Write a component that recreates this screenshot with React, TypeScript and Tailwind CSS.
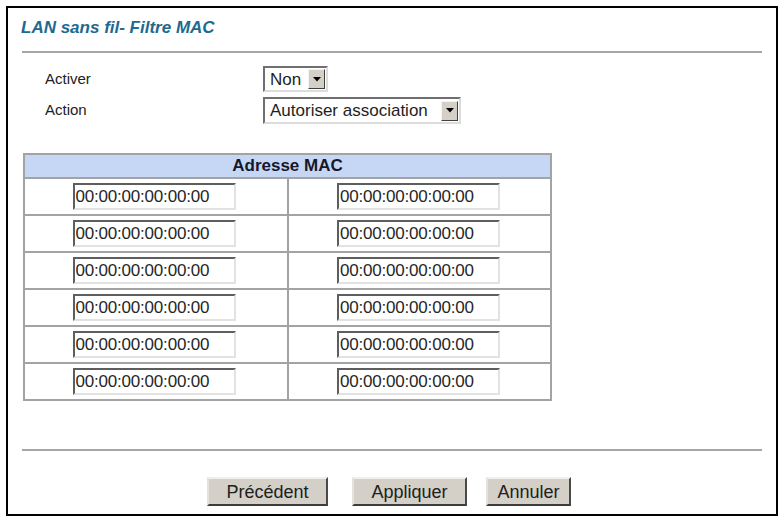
const FONT = "font-['Liberation_Sans',Arial,sans-serif]";

const macs = Array.from({ length: 6 }, () => ['00:00:00:00:00:00', '00:00:00:00:00:00']);

function DropArrow({ className }: { className: string }) {
  return (
    <div
      className={`flex items-center justify-center bg-[#d4d0c8] border border-t-[#f4f3ef] border-l-[#f4f3ef] border-b-[#404040] border-r-[#404040] ${className}`}
    >
      <svg width="8" height="5" viewBox="0 0 8 5">
        <path d="M0 0 H8 L4 4.5 Z" fill="#000" />
      </svg>
    </div>
  );
}

function FakeSelect({ value, width, height }: { value: string; width: string; height: string }) {
  return (
    <div
      className={`flex items-center bg-white border-2 border-t-[#6f6f6f] border-l-[#6f6f6f] border-b-[#dcdcdc] border-r-[#dcdcdc] ${width} ${height}`}
    >
      <span className="flex-1 pl-[5px] text-[17px] leading-none text-[#1e1e1e]">{value}</span>
      <DropArrow className="mr-[1px] h-[20px] w-[17px]" />
    </div>
  );
}

function MacInput({ value }: { value: string }) {
  return (
    <input
      readOnly
      value={value}
      className={`${FONT} h-[27px] w-[163px] bg-white border-2 border-t-[#5e5e5e] border-l-[#5e5e5e] border-b-[#e2e2e2] border-r-[#e2e2e2] pl-[1px] text-[17px] tracking-[-0.2px] text-[#262626] outline-none`}
    />
  );
}

function PushButton({ label, width }: { label: string; width: string }) {
  return (
    <button
      className={`${width} h-[29px] bg-[#d4d0c8] border-2 border-t-[#f0efea] border-l-[#e4e2dc] border-b-[#3c3c3c] border-r-[#4a4a4a] text-[18px] leading-none text-[#202020]`}
    >
      {label}
    </button>
  );
}

export default function App() {
  return (
    <div className={`${FONT} min-h-[518px] w-[779px] bg-white pl-[6px] pt-[6px]`}>
      <div className="flex h-[510px] w-[772px] flex-col border-2 border-black">
        <h1 className="mt-[10px] pl-[13px] text-[17px] font-bold italic leading-[20px] text-[#21698f]">
          LAN sans fil- Filtre MAC
        </h1>
        <div className="mx-[14px] mt-[13px] border-t-2 border-[#a6a6a6]" />

        <div className="mt-[13px] flex items-center pl-[37px]">
          <span className="w-[218px] text-[15px] text-[#222]">Activer</span>
          <FakeSelect value="Non" width="w-[65px]" height="h-[26px]" />
        </div>
        <div className="mt-[5px] flex items-center pl-[37px]">
          <span className="w-[218px] text-[15px] text-[#222]">Action</span>
          <FakeSelect value="Autoriser association" width="w-[198px]" height="h-[27px]" />
        </div>

        <div className="ml-[15px] mt-[29px] w-[529px] border-2 border-[#a3a3a3]">
          <div className="flex h-[24px] items-center justify-center border-b-2 border-[#a3a3a3] bg-[#c6d7f6] text-[17px] font-bold text-[#17172b]">
            Adresse MAC
          </div>
          {macs.map((pair, i) => (
            <div
              key={i}
              className={`grid grid-cols-[264px_1fr] ${i < macs.length - 1 ? 'border-b-2 border-[#a3a3a3]' : ''}`}
            >
              <div className="flex h-[35px] items-center justify-center border-r-2 border-[#a3a3a3] pr-[4px]">
                <MacInput value={pair[0]} />
              </div>
              <div className="flex h-[35px] items-center justify-center pr-[2px]">
                <MacInput value={pair[1]} />
              </div>
            </div>
          ))}
        </div>

        <div className="mx-[14px] mt-[48px] border-t-2 border-[#a6a6a6]" />

        <div className="mt-[26px] flex pl-[199px]">
          <PushButton label="Précédent" width="w-[121px]" />
          <div className="ml-[24px]">
            <PushButton label="Appliquer" width="w-[115px]" />
          </div>
          <div className="ml-[19px]">
            <PushButton label="Annuler" width="w-[85px]" />
          </div>
        </div>
      </div>
    </div>
  );
}
